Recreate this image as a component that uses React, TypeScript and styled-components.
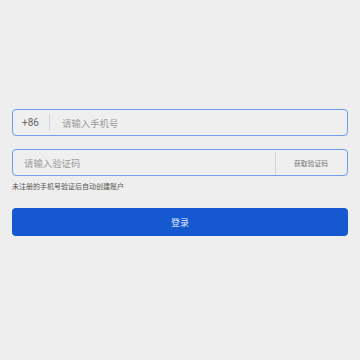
import React from "react";
import styled, { createGlobalStyle } from "styled-components";

const Global = createGlobalStyle`
  html, body { margin: 0; padding: 0; background: #eeeeee; }
  body { font-family: Roboto, "Noto Sans CJK SC", sans-serif; }
  * { box-sizing: border-box; }
`;

const Page = styled.div`
  width: 360px;
  height: 360px;
  padding: 109px 12px 0;
  display: flex;
  flex-direction: column;
`;

const Field = styled.div<{ $mt?: number }>`
  height: 27px;
  margin-top: ${(p) => p.$mt ?? 0}px;
  border: 1px solid #6f9fea;
  border-radius: 4px;
  background: #efefef;
  display: flex;
  align-items: center;
`;

const Prefix = styled.span`
  padding-left: 9px;
  width: 36px;
  font-size: 10px;
  color: #666666;
`;

const Divider = styled.span<{ $h: number }>`
  width: 1px;
  height: ${(p) => p.$h}px;
  background: #d6d6d6;
  flex: none;
`;

const Input = styled.input<{ $pl: number }>`
  flex: 1;
  min-width: 0;
  border: none;
  outline: none;
  background: transparent;
  padding: 0 0 0 ${(p) => p.$pl}px;
  font-family: "Noto Sans CJK SC", sans-serif;
  font-size: 9.4px;
  color: #333;
  &::placeholder { color: #9a9a9a; }
`;

const CodeBtn = styled.span`
  padding: 0 19px 0 18px;
  font-family: "Noto Sans CJK SC", sans-serif;
  font-size: 6.8px;
  color: #777777;
  white-space: nowrap;
`;

const Hint = styled.div`
  margin-top: 5px;
  font-family: "Noto Sans CJK SC", sans-serif;
  font-size: 7px;
  line-height: 10px;
  color: #555555;
`;

const Submit = styled.button`
  margin-top: 17px;
  height: 28px;
  border: none;
  border-radius: 4px;
  background: #1558d0;
  color: #e8eefb;
  font-family: "Noto Sans CJK SC", sans-serif;
  font-size: 9px;
  padding: 0;
`;

export default function App() {
  return (
    <>
      <Global />
      <Page>
        <Field>
          <Prefix>+86</Prefix>
          <Divider $h={17} />
          <Input $pl={12} placeholder="请输入手机号" />
        </Field>
        <Field $mt={13}>
          <Input $pl={11} placeholder="请输入验证码" />
          <Divider $h={22} />
          <CodeBtn>获取验证码</CodeBtn>
        </Field>
        <Hint>未注册的手机号验证后自动创建账户</Hint>
        <Submit>登录</Submit>
      </Page>
    </>
  );
}
